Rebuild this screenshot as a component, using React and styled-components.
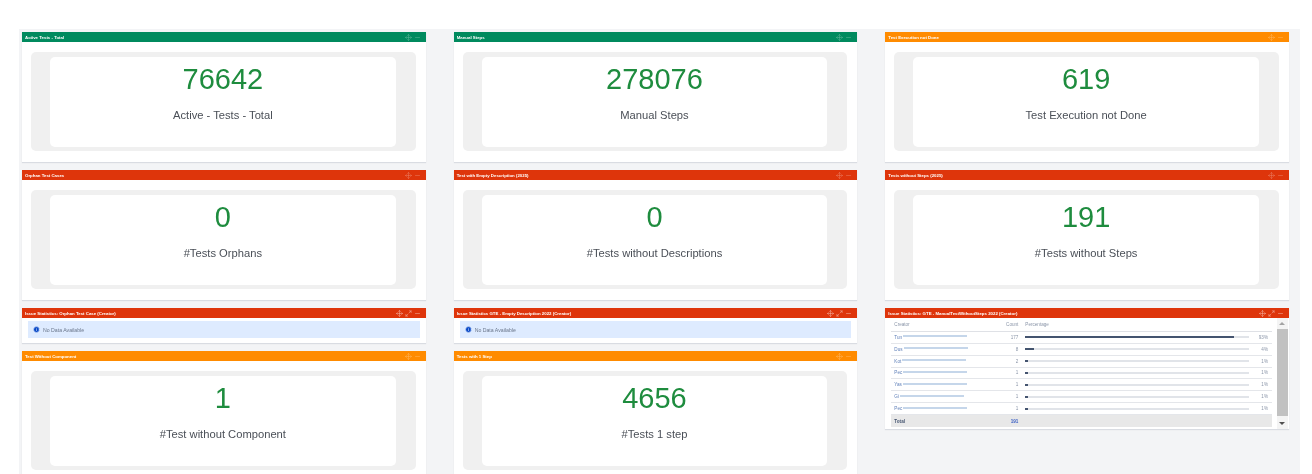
// Dashboard with stat gadgets and issue statistics tables
import React from 'react';
import styled, {createGlobalStyle} from 'styled-components';
import {Info, Maximize2, Minus, Move} from 'lucide-react';

const colors = {
  green: '#008a5e',
  red: '#de350b',
  orange: '#ff8b00'
};

const creators = [
  {name: 'Tun', count: 177, percent: 93},
  {name: 'Dus', count: 8, percent: 4},
  {name: 'Kot', count: 2, percent: 1},
  {name: 'Pec', count: 1, percent: 1},
  {name: 'Yas', count: 1, percent: 1},
  {name: 'Gi', count: 1, percent: 1},
  {name: 'Pec', count: 1, percent: 1}
];

const GlobalStyle = createGlobalStyle`
  html, body {
    margin: 0;
    height: 474px;
    overflow: hidden;
    background: #fff;
    font-family: "Liberation Sans", Arial, sans-serif;
  }
`;

const Board = styled.main`
  box-sizing: border-box;
  width: 1281px;
  height: 445px;
  margin: 29px 0 0 19px;
  padding: 3px 11px 0 3px;
  background: #f3f4f6;
  display: grid;
  grid-template-columns: repeat(3, 1fr);
  column-gap: 28px;
  align-items: start;
  overflow: hidden;
  filter: blur(0.45px);
`;

const Column = styled.div`
  display: flex;
  flex-direction: column;
  gap: 8px;
  min-width: 0;
`;

const Card = styled.section`
  background: #fff;
  box-shadow: 0 1px 1px #d9dce2;
`;

const CardHeader = styled.header`
  height: 10px;
  padding: 0 5px 0 3px;
  display: flex;
  align-items: center;
  justify-content: space-between;
  background: ${props => colors[props.$tone]};
  color: #fff;
  font-size: 4.35px;
  font-weight: bold;
  white-space: nowrap;
`;

const HeaderIcons = styled.div`
  display: flex;
  align-items: center;
  gap: 2px;
  opacity: ${props => props.$dim ? 0.4 : 0.7};
`;

const StatBody = styled.div`
  padding: 10px 10px 11px 9px;
`;

const StatPanel = styled.div`
  padding: 5px 20px 4px 19px;
  background: #f0f0f0;
  border-radius: 5px;
`;

const StatInner = styled.div`
  box-sizing: border-box;
  height: 90px;
  padding-top: 5px;
  background: #fff;
  border-radius: 5px;
  text-align: center;
`;

const StatNumber = styled.div`
  font-size: 29px;
  line-height: 34px;
  color: #1e8c3e;
`;

const StatLabel = styled.div`
  margin-top: 12px;
  font-size: 11.2px;
  line-height: 14px;
  color: #4a4f57;
`;

const AlertBody = styled.div`
  padding: 3px 6px 5px;
`;

const Alert = styled.div`
  height: 17px;
  padding-left: 5px;
  display: flex;
  align-items: center;
  gap: 3px;
  background: #deebff;
  color: #6b778c;
  font-size: 5.2px;
  svg {
    flex: none;
    fill: #0747c6;
  }
`;

const TableBody = styled.div`
  display: flex;
  height: 111px;
`;

const TableWrap = styled.div`
  flex: 1;
  min-width: 0;
  padding: 0 5px 2px 6px;
  display: flex;
  flex-direction: column;
`;

const Row = styled.div`
  box-sizing: border-box;
  height: ${props => props.$head ? '14px' : '12px'};
  display: grid;
  grid-template-columns: 112px 12px 224px 1fr;
  align-items: center;
  padding: 0 4px 0 3px;
  border-bottom: 1px solid ${props => props.$head ? '#dfe1e6' : '#e4e6ea'};
  font-size: 4.6px;
  color: #8a95a8;
  & > :nth-child(3) {
    margin-left: 7px;
    margin-right: -7px;
  }
`;

const TotalRow = styled(Row)`
  height: 12px;
  margin-top: auto;
  background: #e8e8e8;
  border-bottom: 0;
  color: #42526e;
  font-weight: bold;
`;

const CreatorCell = styled.div`
  grid-column: 1;
  grid-row: 1;
  display: flex;
  align-items: center;
  gap: 1px;
  color: #5e7fb8;
`;

const HeadCell = styled.div`
  grid-column: 1;
  grid-row: 1;
`;

const RedactedMail = styled.span`
  width: 64px;
  height: 2px;
  margin-bottom: 2px;
  background: #c5d6ea;
  filter: blur(0.5px);
`;

const CountCell = styled.div`
  justify-self: end;
  grid-column: 1 / span 2;
  grid-row: 1;
  color: ${props => props.$link ? '#3b5fc4' : 'inherit'};
`;

const Track = styled.div`
  height: 2px;
  background: #e1e4e9;
`;

const Fill = styled.div`
  height: 100%;
  min-width: 2px;
  background: #44546f;
`;

const PercentCell = styled.div`
  justify-self: end;
`;

const Scrollbar = styled.div`
  flex: none;
  width: 11px;
  margin-right: 1px;
  display: flex;
  flex-direction: column;
  align-items: center;
  background: #f4f4f4;
`;

const ScrollArrow = styled.div`
  height: 11px;
  display: flex;
  align-items: center;
  justify-content: center;
  &::before {
    content: "";
    border-left: 3px solid transparent;
    border-right: 3px solid transparent;
    ${props => props.$down ? 'border-top: 3px solid #505050;' : 'border-bottom: 3px solid #a3a3a3;'}
  }
`;

const ScrollThumb = styled.div`
  flex: 1;
  width: 100%;
  margin-bottom: 2px;
  background: #c1c1c1;
`;

function GadgetHeader({tone, title, expandable}) {
  return (<CardHeader $tone={tone}>
    <span>{title}</span>
    <HeaderIcons $dim={!expandable}>
      <Move size={7} strokeWidth={1.6} />
      {expandable && <Maximize2 size={7} strokeWidth={1.6} />}
      <Minus size={7} strokeWidth={1.6} />
    </HeaderIcons>
  </CardHeader>);
}

function StatCard({tone, title, value, label}) {
  return (<Card>
    <GadgetHeader tone={tone} title={title} />
    <StatBody>
      <StatPanel>
        <StatInner>
          <StatNumber>{value}</StatNumber>
          <StatLabel>{label}</StatLabel>
        </StatInner>
      </StatPanel>
    </StatBody>
  </Card>);
}

function EmptyCard({title}) {
  return (<Card>
    <GadgetHeader tone="red" title={title} expandable />
    <AlertBody>
      <Alert>
        <Info size={7} color="#deebff" strokeWidth={2} />
        No Data Available
      </Alert>
    </AlertBody>
  </Card>);
}

function TableCard({title}) {
  return (<Card>
    <GadgetHeader tone="red" title={title} expandable />
    <TableBody>
      <TableWrap>
        <Row $head>
          <HeadCell>Creator</HeadCell>
          <CountCell>Count</CountCell>
          <div>Percentage</div>
        </Row>
        {creators.map((creator, index) => <Row key={index}>
          <CreatorCell>{creator.name}<RedactedMail /></CreatorCell>
          <CountCell>{creator.count}</CountCell>
          <Track>
            <Fill style={{width: `${creator.percent}%`}} />
          </Track>
          <PercentCell>{creator.percent}%</PercentCell>
        </Row>)}
        <TotalRow>
          <HeadCell>Total</HeadCell>
          <CountCell $link>191</CountCell>
        </TotalRow>
      </TableWrap>
      <Scrollbar>
        <ScrollArrow />
        <ScrollThumb />
        <ScrollArrow $down />
      </Scrollbar>
    </TableBody>
  </Card>);
}

export default function App() {
  return (<>
    <GlobalStyle />
    <Board>
      <Column>
        <StatCard tone="green" title="Active Tests - Total" value="76642" label="Active - Tests - Total" />
        <StatCard tone="red" title="Orphan Test Cases" value="0" label="#Tests Orphans" />
        <EmptyCard title="Issue Statistics: Orphan Test Case (Creator)" />
        <StatCard tone="orange" title="Test Without Component" value="1" label="#Test without Component" />
      </Column>
      <Column>
        <StatCard tone="green" title="Manual Steps" value="278076" label="Manual Steps" />
        <StatCard tone="red" title="Test with Empty Description (2025)" value="0" label="#Tests without Descriptions" />
        <EmptyCard title="Issue Statistics GTE - Empty Description 2022 (Creator)" />
        <StatCard tone="orange" title="Tests with 1 Step" value="4656" label="#Tests 1 step" />
      </Column>
      <Column>
        <StatCard tone="orange" title="Test Execution not Done" value="619" label="Test Execution not Done" />
        <StatCard tone="red" title="Tests without Steps (2025)" value="191" label="#Tests without Steps" />
        <TableCard title="Issue Statistics: GTE - ManualTestWithoutSteps 2022 (Creator)" />
      </Column>
    </Board>
  </>);
}
